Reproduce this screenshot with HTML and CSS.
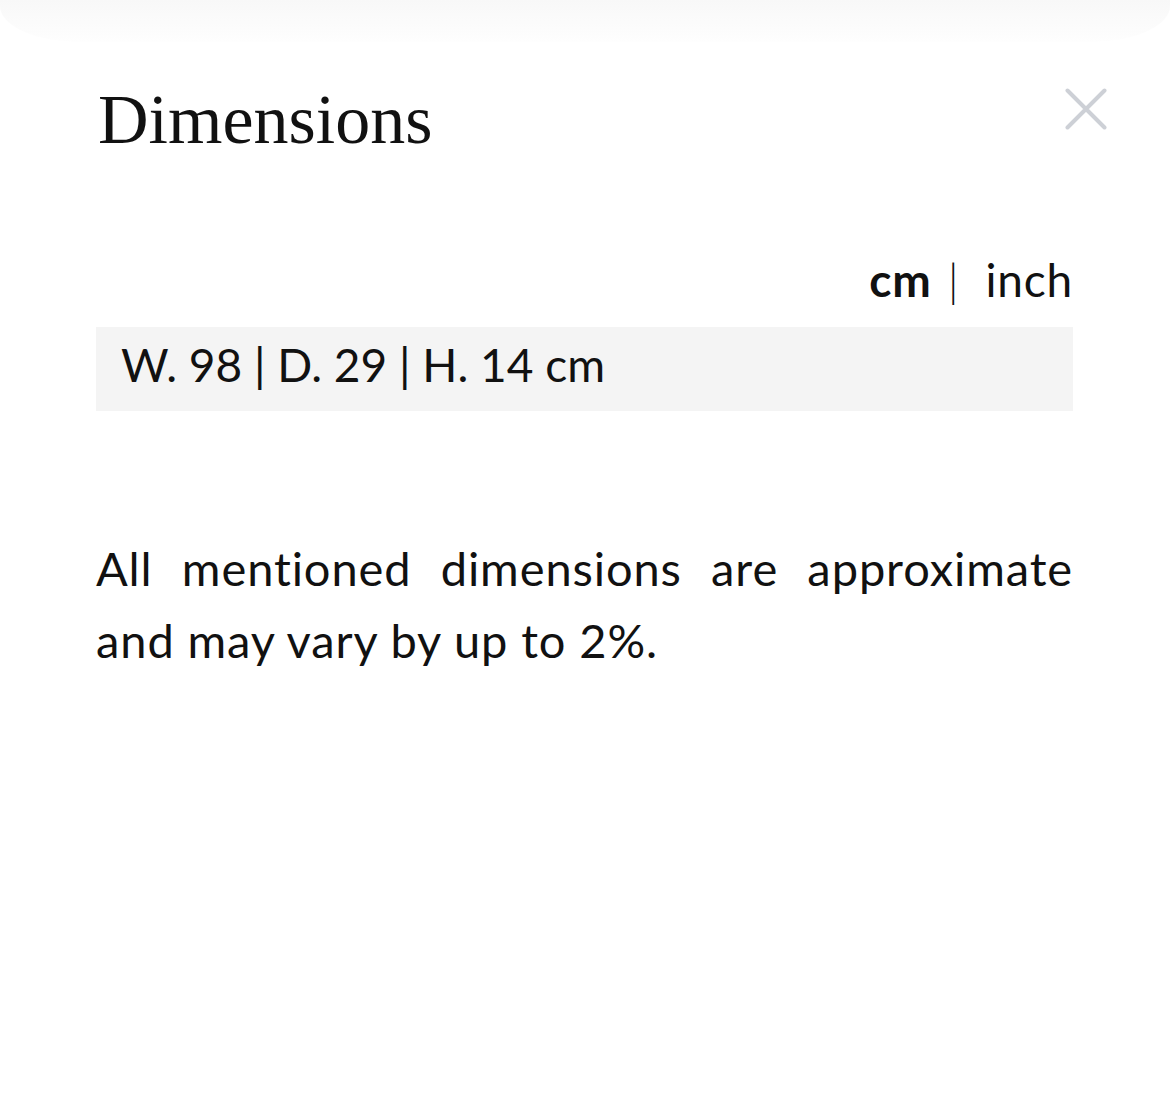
FILE: index.html
```html
<!DOCTYPE html>
<html>
	<head>
		<meta charset="UTF-8">
		<title>Dimensions</title>
		<link rel="stylesheet" href="styles.css">
	</head>
	<body>
		<div class="sheet-top"></div>
		<div class="sheet">
			<div class="sheet-head">
				<h1 class="sheet-title">Dimensions</h1>
				<button class="close-btn" type="button" aria-label="Close">
					<svg width="42" height="42" viewBox="0 0 42 42">
						<path d="M2.5 2.5 L39.5 39.5 M39.5 2.5 L2.5 39.5" stroke="#cdd0d6" stroke-width="4" stroke-linecap="round" fill="none"/>
					</svg>
				</button>
			</div>
			<div class="units">
				<span class="unit active">cm</span><span class="unit-sep">|</span><span class="unit">inch</span>
			</div>
			<div class="dims">W. 98 | D. 29 | H. 14 cm</div>
			<p class="note">All mentioned dimensions are approximate and may vary by up to 2%.</p>
		</div>
	</body>
</html>
```
FILE: styles.css
```css
*{
	margin: 0;
	padding: 0;
	box-sizing: border-box;
}

body{
	background: #fff;
	color: #111;
	font-family: Lato, "Noto Sans", sans-serif;
}

/* faint shadow of the sheet edge above */
.sheet-top{
	height: 42px;
	background: linear-gradient(#f8f8f8, #fcfcfc 70%, #fefefe);
	border-radius: 0 0 80px 80px / 0 0 36px 36px;
}

.sheet{
	padding: 0 97px 0 96px;
}

.sheet-head{
	display: flex;
	justify-content: space-between;
	align-items: flex-start;
	padding-top: 38px;
	height: 128px;
}

.sheet-title{
	font-family: "Liberation Serif", serif;
	font-weight: normal;
	font-size: 70px;
	line-height: 80px;
	color: #111;
	margin-left: 2px;
}

.close-btn{
	border: 0;
	background: none;
	margin: 8px -34px 0 0;
	width: 42px;
	height: 42px;
	cursor: pointer;
}

.units{
	text-align: right;
	font-size: 46px;
	line-height: 60px;
	letter-spacing: 0.8px;
	margin-top: 80px;
	color: #111;
}

.unit.active{
	font-weight: bold;
}

.unit-sep{
	margin: 0 26px 0 16px;
	font-weight: 300;
}

.dims{
	margin-top: 17px;
	height: 84px;
	background: #f4f4f4;
	padding: 0 25px;
	font-size: 46px;
	line-height: 76px;
}

.note{
	margin-top: 121px;
	font-size: 47px;
	line-height: 72px;
	letter-spacing: 0.9px;
	text-align: justify;
}
```
